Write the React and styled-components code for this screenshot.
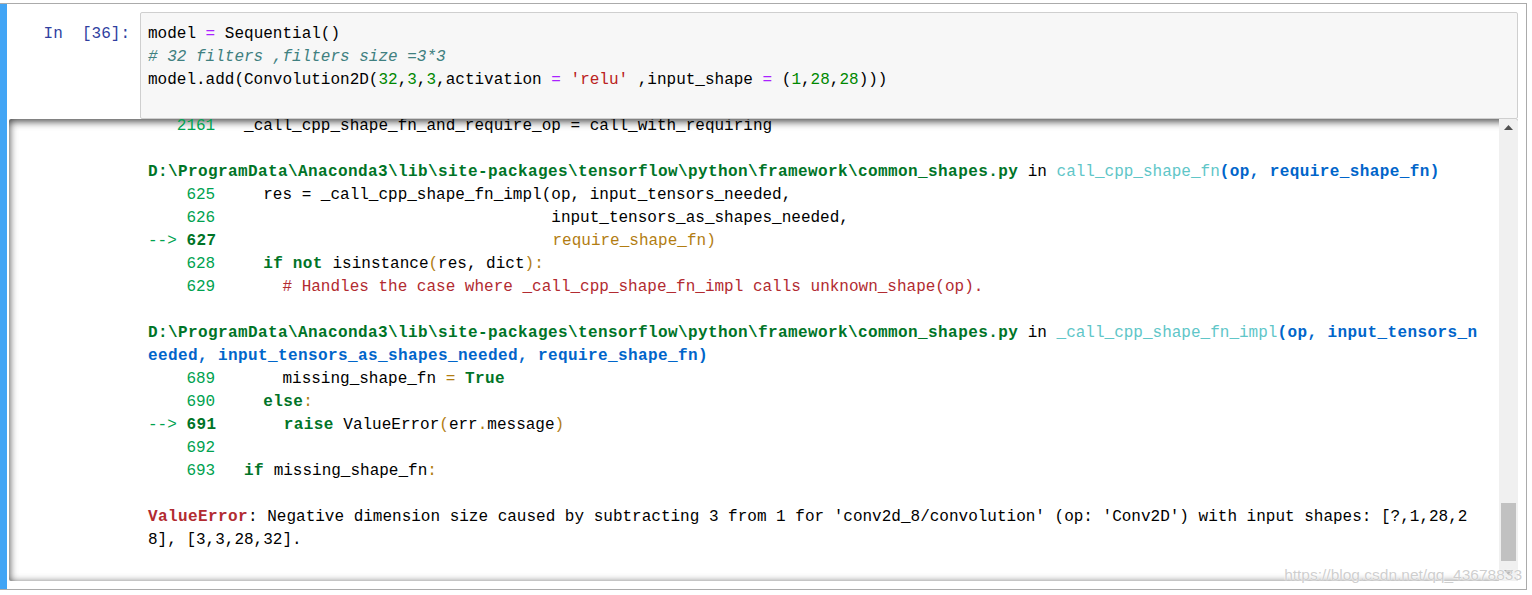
import React from "react";
import styled, { createGlobalStyle } from "styled-components";

const GlobalStyle = createGlobalStyle`
  html, body {
    margin: 0;
    padding: 0;
    background: #fff;
    overflow: hidden;
  }
  body {
    font-family: "Liberation Mono", "DejaVu Sans Mono", monospace;
    font-size: 16px;
    color: #000;
  }
`;

// ansi palette used by the notebook traceback
const C = {
  g: "#00A250",
  G: "#007427",
  c: "#60C6C8",
  b: "#0065CA",
  y: "#B27D12",
  r: "#B22B31",
};

const PATH =
  "D:\\ProgramData\\Anaconda3\\lib\\site-packages\\tensorflow\\python\\framework\\common_shapes.py";

const trace = [
  [["   2161", "g"], ["   _call_cpp_shape_fn_and_require_op = call_with_requiring"]],
  [],
  [[PATH, "G", 1], [" in "], ["call_cpp_shape_fn", "c"], ["(op, require_shape_fn)", "b", 1]],
  [["    625", "g"], ["     res = _call_cpp_shape_fn_impl(op, input_tensors_needed,"]],
  [["    626", "g"], [" ".repeat(35) + "input_tensors_as_shapes_needed,"]],
  [["-->", "g"], [" "], ["627", "G", 1], [" ".repeat(35)], ["require_shape_fn)", "y"]],
  [["    628", "g"], ["     "], ["if", "G", 1], [" "], ["not", "G", 1], [" isinstance"], ["(", "y"], ["res, dict"], ["):", "y"]],
  [["    629", "g"], ["       "], ["# Handles the case where _call_cpp_shape_fn_impl calls unknown_shape(op).", "r"]],
  [],
  [[PATH, "G", 1], [" in "], ["_call_cpp_shape_fn_impl", "c"], ["(op, input_tensors_n", "b", 1]],
  [["eeded, input_tensors_as_shapes_needed, require_shape_fn)", "b", 1]],
  [["    689", "g"], ["       missing_shape_fn "], ["=", "y"], [" "], ["True", "G", 1]],
  [["    690", "g"], ["     "], ["else", "G", 1], [":", "y"]],
  [["-->", "g"], [" "], ["691", "G", 1], ["       "], ["raise", "G", 1], [" ValueError"], ["(", "y"], ["err"], [".", "y"], ["message"], [")", "y"]],
  [["    692", "g"]],
  [["    693", "g"], ["   "], ["if", "G", 1], [" missing_shape_fn"], [":", "y"]],
  [],
  [
    ["ValueError", "r", 1],
    [": Negative dimension size caused by subtracting 3 from 1 for 'conv2d_8/convolution' (op: 'Conv2D') with input shapes: [?,1,28,2"],
  ],
  [["8], [3,3,28,32]."]],
];

const Page = styled.div`
  position: relative;
  width: 1527px;
  padding-top: 3px;
`;

const Cell = styled.div`
  position: relative;
  display: flex;
  flex-direction: column;
  border: 1px solid #ababab;
  padding: 8px;

  &::before {
    content: "";
    position: absolute;
    left: -1px;
    top: 0;
    bottom: 0;
    width: 7px;
    background: #42a5f5;
  }
`;

const InputRow = styled.div`
  display: flex;
  height: 107px;
`;

const Prompt = styled.div`
  width: 131px;
  flex: none;
  box-sizing: border-box;
  padding: 11px 10px 0 0;
  text-align: right;
  white-space: pre;
  line-height: 23px;
  color: #303f9f;
`;

const InputBox = styled.div`
  flex: 1;
  box-sizing: border-box;
  background: #f7f7f7;
  border: 1px solid #cfcfcf;
  border-radius: 2px;
  padding: 10px 7px 26px;
`;

const Line = styled.div`
  height: 23px;
  line-height: 23px;
  white-space: pre;
`;

const Tok = styled.span`
  color: ${(p) => p.$c || "inherit"};
  font-weight: ${(p) => (p.$b ? 700 : 400)};
  letter-spacing: ${(p) => (p.$b ? "0.4px" : "0")};
  font-style: ${(p) => (p.$i ? "italic" : "normal")};
`;

const OutputScroll = styled.div`
  display: flex;
  height: 462px;
  border-radius: 2px;
  box-shadow: inset 0 2px 8px rgba(0, 0, 0, 0.8);
  overflow: hidden;
`;

const OutputPrompt = styled.div`
  width: 131px;
  flex: none;
`;

const OutputText = styled.div`
  flex: 1;
  overflow: hidden;
  padding-left: 8px;
`;

const Trace = styled.div`
  margin-top: -4px;
`;

const Scrollbar = styled.div`
  width: 19px;
  flex: none;
  display: flex;
  flex-direction: column;
  background: #f0f0f0;
`;

const ArrowBtn = styled.div`
  height: 17px;
  flex: none;
  display: flex;
  align-items: center;
  justify-content: center;
`;

const Track = styled.div`
  flex: 1;
  display: flex;
  flex-direction: column;
  justify-content: flex-end;
  align-items: center;
  padding-bottom: 3px;
`;

const Thumb = styled.div`
  width: 15px;
  height: 58px;
  background: #c1c1c1;
`;

const Watermark = styled.div`
  position: absolute;
  right: 5px;
  top: 566px;
  font-family: "Liberation Sans", Arial, sans-serif;
  font-size: 15.5px;
  color: rgba(190, 190, 190, 0.75);
  text-shadow: 0 0 2px #fff, 0 0 1px #fff;
  pointer-events: none;
`;

const Arrow = ({ up, color }) => (
  <svg width="9" height="5" viewBox="0 0 9 5">
    <polygon points={up ? "4.5,0 9,5 0,5" : "0,0 9,0 4.5,5"} fill={color} />
  </svg>
);

const renderTokens = (parts) =>
  parts.map(([text, c, b], i) => (
    <Tok key={i} $c={c ? C[c] : undefined} $b={!!b}>
      {text}
    </Tok>
  ));

const App = () => (
  <>
    <GlobalStyle />
    <Page>
      <Cell>
        <InputRow>
          <Prompt>{"In  [36]:"}</Prompt>
          <InputBox>
            <Line>
              model <Tok $c="#AA22FF">=</Tok> Sequential()
            </Line>
            <Line>
              <Tok $c="#408080" $i>
                # 32 filters ,filters size =3*3
              </Tok>
            </Line>
            <Line>
              model.add(Convolution2D(<Tok $c="#008800">32</Tok>,
              <Tok $c="#008800">3</Tok>,<Tok $c="#008800">3</Tok>,activation{" "}
              <Tok $c="#AA22FF">=</Tok> <Tok $c="#BA2121">'relu'</Tok> ,input_shape{" "}
              <Tok $c="#AA22FF">=</Tok> (<Tok $c="#008800">1</Tok>,
              <Tok $c="#008800">28</Tok>,<Tok $c="#008800">28</Tok>)))
            </Line>
          </InputBox>
        </InputRow>
        <OutputScroll>
          <OutputPrompt />
          <OutputText>
            <Trace>
              {trace.map((parts, i) => (
                <Line key={i}>{renderTokens(parts)}</Line>
              ))}
            </Trace>
          </OutputText>
          <Scrollbar>
            <ArrowBtn>
              <Arrow up color="#505050" />
            </ArrowBtn>
            <Track>
              <Thumb />
            </Track>
            <ArrowBtn>
              <Arrow color="#a3a3a3" />
            </ArrowBtn>
          </Scrollbar>
        </OutputScroll>
      </Cell>
      <Watermark>https://blog.csdn.net/qq_43678833</Watermark>
    </Page>
  </>
);

export default App;
